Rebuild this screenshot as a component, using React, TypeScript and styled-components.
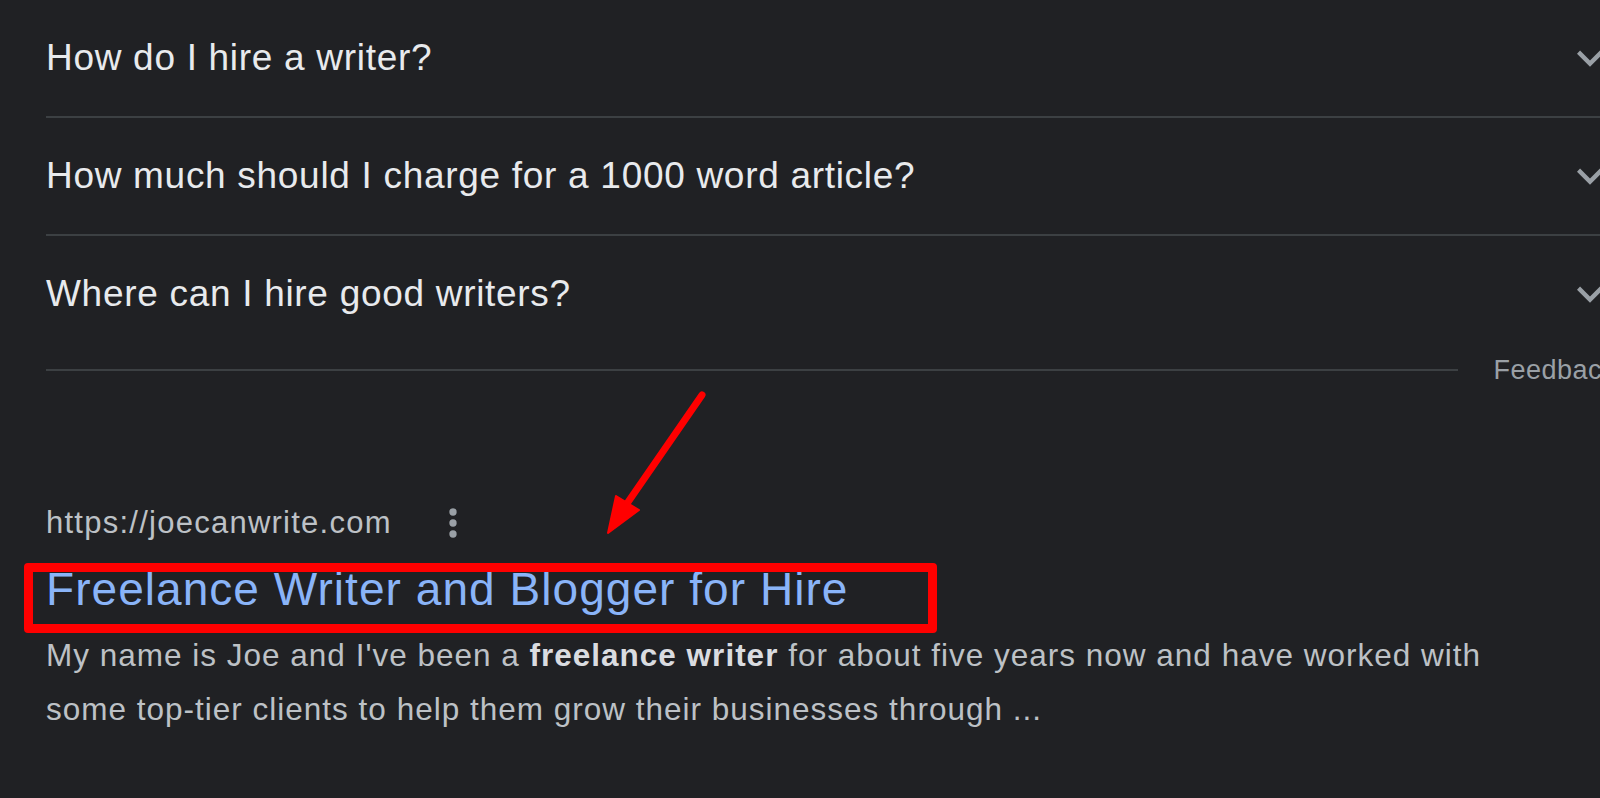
import React from "react";
import styled, { createGlobalStyle } from "styled-components";

const GlobalStyle = createGlobalStyle`
  html, body {
    margin: 0;
    padding: 0;
    background: #202124;
    overflow: hidden;
  }
  body {
    font-family: "Liberation Sans", Arial, sans-serif;
  }
`;

const Page = styled.div`
  position: relative;
  width: 100%;
  height: 798px;
  overflow: hidden;
  background: #202124;
`;

const Content = styled.main`
  padding-left: 46px;
  margin-right: -16px;
`;

const QuestionList = styled.section`
  display: flex;
  flex-direction: column;
`;

const QuestionRow = styled.div`
  display: flex;
  align-items: center;
  justify-content: space-between;
  height: 116px;
  border-bottom: 2px solid #3c4043;
  &:last-child {
    border-bottom: none;
  }
`;

const QuestionText = styled.span`
  font-size: 37px;
  letter-spacing: 0.7px;
  color: #e8eaed;
`;

const Chevron = styled.svg`
  width: 52px;
  height: 52px;
  fill: #9aa0a6;
  flex: none;
`;

const FeedbackRow = styled.div`
  display: flex;
  align-items: center;
  height: 36px;
  gap: 35px;
`;

const FeedbackLine = styled.div`
  flex: 1;
  height: 2px;
  background: #3c4043;
`;

const FeedbackText = styled.span`
  font-size: 27px;
  letter-spacing: 0.5px;
  color: #9aa0a6;
`;

const Result = styled.article`
  margin-top: 111px;
  display: flex;
  flex-direction: column;
  align-items: flex-start;
`;

const CiteRow = styled.div`
  display: flex;
  align-items: center;
  height: 48px;
`;

const Cite = styled.cite`
  font-style: normal;
  font-size: 31px;
  letter-spacing: 1.25px;
  color: #bdc1c6;
`;

const MoreIcon = styled.svg`
  width: 44px;
  height: 44px;
  fill: #9aa0a6;
  margin-left: 39px;
`;

const TitleWrap = styled.div`
  position: relative;
  margin-top: 14px;
  &::after {
    content: "";
    position: absolute;
    left: -22px;
    top: 2px;
    width: 913px;
    height: 70px;
    box-sizing: border-box;
    border: 9px solid #ff0000;
    border-radius: 4px;
    pointer-events: none;
  }
`;

const Title = styled.h3`
  margin: 0;
  font-weight: normal;
  font-size: 46px;
  line-height: 56px;
  letter-spacing: 1.05px;
  color: #8ab4f8;
  white-space: nowrap;
`;

const Snippet = styled.p`
  margin: 11px 0 0;
  width: 1470px;
  font-size: 31.5px;
  line-height: 54px;
  letter-spacing: 1px;
  color: #bdc1c6;
  b {
    font-weight: bold;
    color: #dadce0;
  }
`;

const ArrowOverlay = styled.svg`
  position: absolute;
  left: 0;
  top: 0;
  width: 1600px;
  height: 798px;
  pointer-events: none;
`;

const questions = [
  "How do I hire a writer?",
  "How much should I charge for a 1000 word article?",
  "Where can I hire good writers?",
];

export default function App() {
  return (
    <>
      <GlobalStyle />
      <Page>
        <Content>
          <QuestionList>
            {questions.map((q) => (
              <QuestionRow key={q}>
                <QuestionText>{q}</QuestionText>
                <Chevron viewBox="0 0 24 24">
                  <path d="M16.59 8.59L12 13.17 7.41 8.59 6 10l6 6 6-6z" />
                </Chevron>
              </QuestionRow>
            ))}
          </QuestionList>
          <FeedbackRow>
            <FeedbackLine />
            <FeedbackText>Feedback</FeedbackText>
          </FeedbackRow>
          <Result>
            <CiteRow>
              <Cite>https://joecanwrite.com</Cite>
              <MoreIcon viewBox="0 0 24 24">
                <circle cx="12" cy="6" r="2" />
                <circle cx="12" cy="12" r="2" />
                <circle cx="12" cy="18" r="2" />
              </MoreIcon>
            </CiteRow>
            <TitleWrap>
              <Title>Freelance Writer and Blogger for Hire</Title>
            </TitleWrap>
            <Snippet>
              My name is Joe and I've been a <b>freelance writer</b> for about five years now and have worked with some top-tier clients to help them grow their businesses through ...
            </Snippet>
          </Result>
        </Content>
        <ArrowOverlay viewBox="0 0 1600 798">
          <line x1="702" y1="395" x2="626" y2="505" stroke="#ff0000" strokeWidth="7" strokeLinecap="round" />
          <polygon points="608,533 616,496 639,510" fill="#ff0000" stroke="#ff0000" strokeWidth="2" strokeLinejoin="round" />
        </ArrowOverlay>
      </Page>
    </>
  );
}
